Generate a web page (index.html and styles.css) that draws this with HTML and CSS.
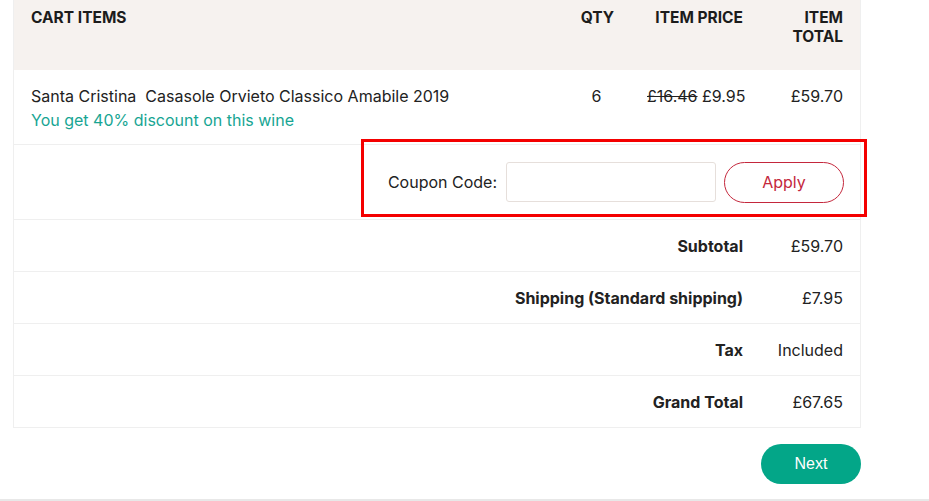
FILE: index.html
```html
<!DOCTYPE html>
<html>
<head>
<meta charset="utf-8">
<link rel="stylesheet" href="styles.css">
</head>
<body>
<div class="page">
  <div class="cart">
    <div class="row head">
      <div class="cell c-item">CART ITEMS</div>
      <div class="cell c-qty">QTY</div>
      <div class="cell c-price">ITEM PRICE</div>
      <div class="cell c-total">ITEM TOTAL</div>
    </div>
    <div class="row item">
      <div class="cell c-item">
        <div class="name">Santa Cristina&nbsp; Casasole Orvieto Classico Amabile 2019</div>
        <div class="discount">You get 40% discount on this wine</div>
      </div>
      <div class="cell c-qty">6</div>
      <div class="cell c-price"><s>£16.46</s> £9.95</div>
      <div class="cell c-total">£59.70</div>
    </div>
    <div class="row coupon">
      <div class="coupon-box">
        <label class="coupon-label" for="cc">Coupon Code:</label>
        <input class="coupon-input" id="cc" type="text">
        <button class="apply">Apply</button>
      </div>
      <div class="highlight"></div>
    </div>
    <div class="row sum">
      <div class="cell s-label">Subtotal</div>
      <div class="cell c-total">£59.70</div>
    </div>
    <div class="row sum">
      <div class="cell s-label">Shipping (Standard shipping)</div>
      <div class="cell c-total">£7.95</div>
    </div>
    <div class="row sum">
      <div class="cell s-label">Tax</div>
      <div class="cell c-total">Included</div>
    </div>
    <div class="row sum last">
      <div class="cell s-label">Grand Total</div>
      <div class="cell c-total">£67.65</div>
    </div>
  </div>
  <div class="actions">
    <button class="next">Next</button>
  </div>
  <div class="footer-line"></div>
</div>
</body>
</html>
```
FILE: styles.css
```css
* { box-sizing: border-box; }
html, body { margin: 0; padding: 0; background: #fff; }
body {
  font-family: Inter, "Open Sans", sans-serif;
  color: #222;
  font-size: 16px;
}
.page { width: 929px; }
.cart {
  margin-left: 13px;
  width: 848px;
  border: 1px solid #efefef;
  border-top: none;
}
.row {
  display: grid;
  grid-template-columns: 1fr 67px 130px 100px;
  border-bottom: 1px solid #efefef;
  position: relative;
}
.row.last { border-bottom: none; height: 51px; }
.cell { padding: 0 17px; line-height: 24px; }
.c-qty { text-align: center; padding: 0; }
.c-price, .c-total { text-align: right; white-space: nowrap; }
.head {
  background: #f6f2ef;
  height: 70px;
  border-bottom: none;
  font-weight: 700;
  font-size: 15.5px;
  color: #1c1c1c;
}
.head .cell { line-height: 19px; padding-top: 8px; }
.head .c-qty { padding-left: 2px; }
.head .c-total { white-space: normal; padding-left: 20px; }
.item { height: 75px; }
.item .cell { padding-top: 14px; }
.discount { color: #17a593; }
.c-price s { text-decoration: line-through; }
.coupon { height: 75px; display: flex; justify-content: flex-end; align-items: center; padding-right: 16px; }
.coupon-box { display: flex; align-items: center; }
.coupon-label { margin-right: 9px; }
.coupon-input {
  width: 210px; height: 40px;
  border: 1px solid #e6dfdb; border-radius: 3px;
  margin-right: 8px;
  font: inherit;
}
.apply {
  width: 120px; height: 41px;
  border: 1px solid #c4273c; border-radius: 21px;
  background: #fff; color: #c4273c;
  font-family: Inter, sans-serif; font-size: 16px;
}
.highlight {
  position: absolute;
  left: 347px; top: -6px;
  width: 506px; height: 78px;
  border: 3px solid #f40000;
}
.sum { height: 52px; align-items: center; }
.s-label { grid-column: 1 / 4; text-align: right; font-weight: 700; }
.actions { width: 861px; display: flex; justify-content: flex-end; padding-top: 16px; }
.next {
  width: 100px; height: 40px; border: none; border-radius: 20px;
  background: #03a688; color: #fff;
  font-family: "Liberation Sans", Arial, sans-serif; font-size: 16px;
}
.footer-line { margin-top: 15px; border-top: 2px solid #e8e8e8; }
```
